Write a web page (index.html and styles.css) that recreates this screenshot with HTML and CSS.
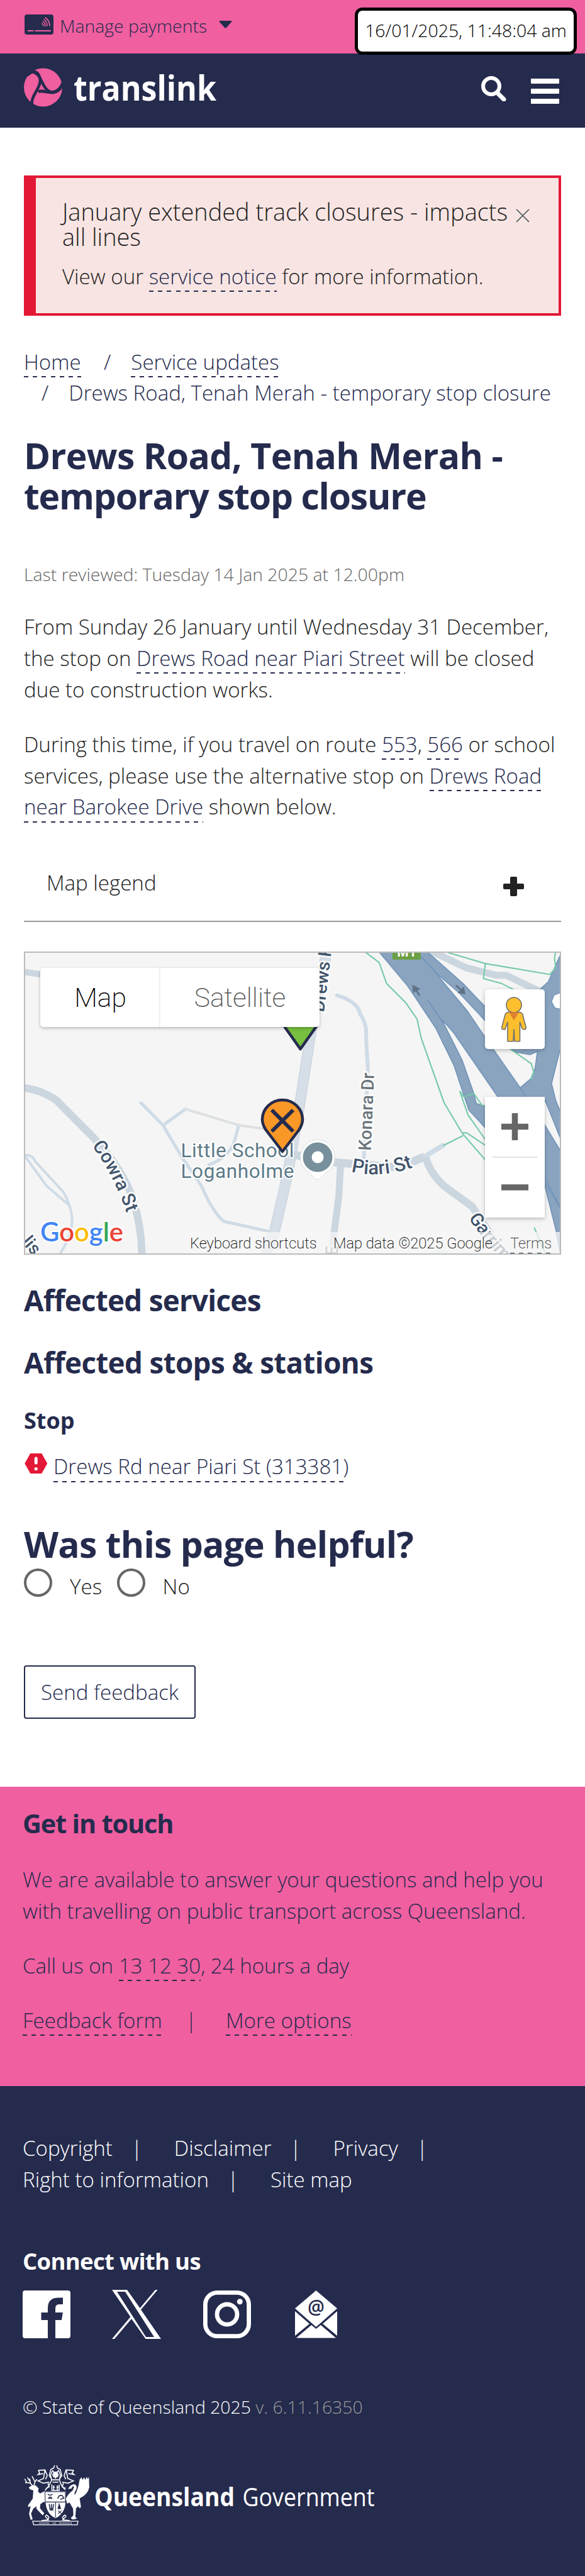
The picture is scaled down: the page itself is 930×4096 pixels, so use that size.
FILE: index.html
```html
<!DOCTYPE html>
<html lang="en">
<head>
<meta charset="utf-8">
<title>Drews Road, Tenah Merah - temporary stop closure | Translink</title>
<link rel="stylesheet" href="styles.css">
</head>
<body>
<div class="topbar">
  <svg class="card-icon" viewBox="0 0 46 32"><rect width="46" height="32" rx="4" fill="#252b4d"/><g fill="none" stroke="#f05fa0" stroke-width="1.6" stroke-linecap="round"><path d="M28 14q2 2 2 4M29.500 11q3.500 3 3.500 7.500M31 8q5 4 5 10M33 5q7 5 7 13"/></g><path d="M5 26h9.500M16.500 26H42" stroke="#f05fa0" stroke-width="2.200"/></svg>
  <span class="manage">Manage payments</span>
  <svg class="caret" viewBox="0 0 22 13"><path d="M1 0h20q1 1 0 2.500L12.500 12q-1.500 1.500-3 0L1 2.500Q0 1 1 0z" fill="#252b4d"/></svg>
  <div class="clock">16/01/2025, 11:48:04 am</div>
</div>
<header class="nav">
  <svg class="logo" viewBox="0 0 310 64">
    <circle cx="30.500" cy="31" r="30.500" fill="#f05fa0"/>
    <path d="M5 12Q18 0 24 12C30 24 20 35 15 46Q11 55 14 61" fill="none" stroke="#252b4d" stroke-width="4.500"/>
    <path d="M2 8Q9 4 14 5L9 12z" fill="#252b4d"/>
    <path d="M11 6C28 8 26 24 36 34C46 44 58 35 62 23" fill="none" stroke="#252b4d" stroke-width="4.500"/>
    <path d="M23 38C30 34 40 42 50 38Q57 36 62 26" fill="none" stroke="#252b4d" stroke-width="5"/>
    <text class="wordmark" x="79" y="52" textLength="227" lengthAdjust="spacingAndGlyphs">translink</text>
  </svg>
  <svg class="search" viewBox="0 0 40 40"><circle cx="16" cy="16" r="13" fill="none" stroke="#fff" stroke-width="6"/><path d="M26 27l10 10" stroke="#fff" stroke-width="7" stroke-linecap="round"/></svg>
  <div class="burger"><i></i><i></i><i></i></div>
</header>

<main class="page">
  <section class="alert">
    <h2 class="alert-title">January extended track closures - impacts<br>all lines</h2>
    <svg class="close" viewBox="0 0 22 22"><path d="M1 3l20 19M21 3L1 22" stroke="#fff" stroke-width="1.800"/><path d="M1 1l20 20M21 1L1 21" stroke="#666" stroke-width="1.800"/></svg>
    <p class="text">View our <a>service notice</a> for more information.</p>
  </section>

  <nav class="crumbs">
    <div class="crumb-row"><a>Home</a><span class="slash">/</span><a>Service updates</a></div>
    <div class="crumb-row second"><span class="slash">/</span><span>Drews Road, Tenah Merah - temporary stop closure</span></div>
  </nav>

  <h1 class="title"><span class="t1">Drews Road, Tenah Merah -</span><br><span class="t2">temporary stop closure</span></h1>
  <p class="reviewed">Last reviewed: Tuesday 14 Jan 2025 at 12.00pm</p>
  <p class="text para">From Sunday 26 January until Wednesday 31 December,<br>the stop on <a>Drews Road near Piari Street</a> will be closed<br>due to construction works.</p>
  <p class="text para">During this time, if you travel on route <a>553</a>, <a>566</a> or school<br>services, please use the alternative stop on <a>Drews Road</a><br><a>near Barokee Drive</a> shown below.</p>

  <div class="legend"><span>Map legend</span>
    <svg class="plus" viewBox="0 0 33 31"><rect x="11" y="0" width="11" height="31" rx="2" fill="#222"/><rect x="0" y="11" width="33" height="9" rx="2" fill="#222"/></svg>
  </div>

  <div class="map">
    <svg class="map-art" viewBox="0 0 854 482">
      <rect width="854" height="482" fill="#f5f5f5"/>
      <g transform="scale(.5931 .32196) translate(-64 -42)" class="roads">
        <path d="M64 142L120 158" stroke-width="10"/>
        <path class="lane" d="M378 790L437 900L497 820M437 900L485 1050L540 1200Q570 1330 600 1375L735 1430M640 900L625 1000Q600 1070 560 1095" stroke-width="5"/>
        <path class="lane faint" d="M497 820L640 900L720 920" stroke-width="4"/>
        <path class="lane" d="M64 1050Q85 1040 95 1080L170 1230Q195 1310 193 1380Q190 1450 160 1538M70 1060L125 1200L182 1290" stroke-width="4"/>
        <path d="M64 715Q110 725 150 775L250 960Q330 1120 355 1260Q380 1400 380 1538" stroke-width="12"/>
        <path class="edge" d="M876 42L835 420L803 800L770 1150L735 1430L712 1538" stroke-width="17"/>
        <path class="core" d="M876 42L835 420L803 800L770 1150L735 1430L712 1538" stroke-width="15"/>
        <path d="M785 1045L905 1085L1070 1108L1138 1055" stroke-width="13"/>
        <path class="lane" d="M1138 1055L1187 1000" stroke-width="8"/>
        <path d="M913 1090L908 1250L888 1538" stroke-width="11"/>
        <path d="M1142 1060Q1150 1130 1190 1200L1265 1300L1350 1538" stroke-width="12"/>
        <path class="lane" d="M903 258Q960 290 965 350Q985 400 981 470L986 620L975 1080" stroke-width="6"/>
        <path class="park" d="M1150 1538L1180 1500L1215 1538z"/>
      </g>
      <g transform="translate(466.800 -5.600) scale(.2629)">
        <path d="M680 15L900 120L1080 165L1140 165L1360 270" fill="none" stroke="#cbd6df" stroke-width="42"/>
        <g fill="#8aa4c0" stroke="#6f93b8" stroke-width="6">
          <path d="M365 15L545 230L715 485L825 710L915 980L1100 1180L1100 990L960 940L945 880L875 680L765 460L750 430L825 515L1090 900L1374 1390L1464 1560L1480 1560L1480 1245L1374 1070L1225 845L1065 615L905 380L705 140L715 150L850 265L1014 440L1060 400L1014 355L880 215L655 15z"/>
          <path d="M1480 20L1460 60L1395 205L1355 240L1200 400L1100 560L1200 630L1285 645L1330 625L1315 730L1290 790L1225 845L1260 900L1380 930L1480 1180L1480 1020L1440 920L1415 820L1480 560z"/>
          <path d="M1360 1380L1470 1580L1470 1860L1440 1700z"/>
        </g>
        <path d="M625 50L710 140M665 315L765 460" stroke="#6f93b8" stroke-width="7"/>
        <path d="M1480 265L1430 285L1415 325L1435 362L1480 372" fill="#fff" stroke="#6f93b8" stroke-width="5"/>
        <g fill="none" stroke="#76c9a8" stroke-width="8">
          <path d="M285 22L373 88L417 214L533 330L602 430L627 545L765 935L875 1120L1100 1380M760 1195L880 1135M870 1118H902L1100 1250M1100 1280L910 1010L860 865L885 900L945 880L995 952H1100"/>
          <path d="M790 28L1015 94L1405 160L1440 120L1433 60L1440 20M1015 94L1003 185L1110 213L1290 305M1150 600L1293 700L1307 750L1290 795M1310 1690L1400 1900"/>
        </g>
        <g fill="#5f7388" stroke="#5f7388" stroke-width="11"><path d="M617 287L590 245"/><path stroke="none" d="M573 222L622 247L577 272z"/><path d="M837 226L875 260"/><path stroke="none" d="M895 281L846 272L884 232z"/></g>
        <rect x="453" y="0" width="171" height="70" fill="#6b9f43"/>
      </g>
      <text class="badge" x="608.500" y="8">M1</text>
      <path id="piari" d="M520 350Q570 362 625 341" fill="none"/>
      <path id="cowra" d="M108 309Q143 355 165 420" fill="none"/>
      <path id="garri" d="M707 424Q722 448 764 495" fill="none"/>
      <g class="street">
        <text transform="translate(477 97) rotate(-83)" font-size="29">Drews Rd</text>
        <text class="grey" transform="translate(551.500 317) rotate(-87.500)" font-size="28" textLength="124">Konara Dr</text>
        <text font-size="31"><textPath href="#piari">Piari St</textPath></text>
        <text font-size="30"><textPath href="#cowra">Cowra St</textPath></text>
        <text font-size="29"><textPath href="#garri">Garrima</textPath></text>
        <text transform="translate(-4 462) rotate(50)" font-size="28">lis</text>
        <text class="grey" transform="translate(499 484) rotate(-88)" font-size="28">E</text>
      </g>
      <path d="M467 299a28 28 0 0 1 20 47q-8 6-15 14-5 5-10 0-7-8-15-14a28 28 0 0 1 20-47z" fill="#fff" stroke="#d8dde0"/>
      <circle cx="467" cy="327" r="16.500" fill="none" stroke="#78909c" stroke-width="14"/>
      <g class="place"><text x="249.500" y="327" textLength="180">Little School</text><text x="249.500" y="360" textLength="180">Loganholme</text></g>
      <path d="M439.500 155L414 119V90H465V119z" fill="#76bf3f" stroke="#252b4d" stroke-width="4.500" stroke-linejoin="round"/>
      <path d="M411 318L385 284Q379 275 379 267a32 31 0 0 1 64 0Q443 275 437 284z" fill="#f99727" stroke="#252b4d" stroke-width="4.500" stroke-linejoin="round"/>
      <path d="M394 252l34 34M428 252l-34 34" stroke="#252b4d" stroke-width="6"/>
      <text class="google" x="26" y="461" textLength="132" lengthAdjust="spacingAndGlyphs"><tspan fill="#4285f4">G</tspan><tspan fill="#ea4335">o</tspan><tspan fill="#fbbc05">o</tspan><tspan fill="#4285f4">g</tspan><tspan fill="#34a853">l</tspan><tspan fill="#ea4335">e</tspan></text>
    </svg>
    <div class="map-type"><span>Map</span><span class="sat">Satellite</span></div>
    <div class="pegman">
      <svg viewBox="0 0 152 272"><g fill="#fdbf2d" stroke="#6f6f6f" stroke-width="6" stroke-linejoin="round"><path d="M40 92h72q12 2 16 12l22 84q-4 10-14 8-8 0-10-4l-14-40v116H80l-4-72-4 72H38V152l-14 40q-4 6-10 4-12 0-12-10l22-82q4-10 16-12z"/><circle cx="76" cy="49" r="46"/></g><path d="M46 92h60l-30 50z" fill="#e08030"/></svg>
    </div>
    <div class="zoom">
      <svg viewBox="0 0 95 192"><path d="M26 47.500h43M47.500 26v43M26 144h43" stroke="#666" stroke-width="9.500"/><path d="M12 96h71" stroke="#e6e6e6" stroke-width="2.400"/></svg>
    </div>
    <div class="attrib"><span class="kb">Keyboard shortcuts</span><span class="data">Map data ©2025 Google</span><a>Terms</a></div>
  </div>

  <h2 class="h2">Affected services</h2>
  <h2 class="h2 stops">Affected stops &amp; stations</h2>
  <h3 class="h3">Stop</h3>
  <div class="stop-row">
    <svg class="alert-icon" viewBox="0 0 36 32"><path d="M9 0h18l9 16-9 16H9L0 16z" fill="#e31836"/><path d="M18 8v7" stroke="#fff" stroke-width="5" stroke-linecap="round"/><circle cx="18" cy="24.500" r="2.600" fill="#fff"/></svg>
    <a>Drews Rd near Piari St (313381)</a>
  </div>

  <h2 class="title helpful">Was this page helpful?</h2>
  <div class="radios"><i></i><span class="yes">Yes</span><i></i><span>No</span></div>
  <button class="send">Send feedback</button>
</main>

<section class="touch">
  <h2 class="touch-title">Get in touch</h2>
  <p class="text">We are available to answer your questions and help you<br>with travelling on public transport across Queensland.</p>
  <p class="text">Call us on <a>13 12 30</a>, 24 hours a day</p>
  <p class="text links"><a>Feedback form</a><span>|</span><a>More options</a></p>
</section>

<footer class="footer">
  <div class="foot-links"><span>Copyright</span><i>|</i><span>Disclaimer</span><i>|</i><span>Privacy</span><i>|</i></div>
  <div class="foot-links"><span>Right to information</span><i>|</i><span>Site map</span></div>
  <h3 class="connect">Connect with us</h3>
  <div class="social">
    <svg class="fb" viewBox="0 0 76 76"><path d="M4 0h68q4 0 4 4v68q0 4-4 4H52V47h10l1.800-12H52v-6q0-7 6-7h6V11.500h-7Q40 11.500 40 28v7H29.500v12H40v29H4q-4 0-4-4V4q0-4 4-4z" fill="#fff"/></svg>
    <svg class="x" viewBox="0 0 78 78"><path d="M0 0h24l20.500 29L69 0h3.500L46 31.500 78 78H53.500L31 46 4 78H0l29.500-35zM8 3l46 72h13L21 3z" fill="#fff" fill-rule="evenodd"/></svg>
    <svg class="ig" viewBox="0 0 76 76"><rect x="3.400" y="3.400" width="69.200" height="69.200" rx="19" fill="none" stroke="#fff" stroke-width="6.800"/><circle cx="38" cy="38" r="16" fill="none" stroke="#fff" stroke-width="6.800"/><circle cx="58.300" cy="17.700" r="4.500" fill="#fff"/></svg>
    <svg class="mail" viewBox="0 0 67 76"><path d="M33.500 0L67 28.500 33.500 58 0 28.500z" fill="#fff"/><path d="M0 33l23 20L0 72zM67 33L44 53l23 19zM2 75.500L26 55l7.500 6 7.500-6 24 20.500z" fill="#fff"/><text x="33.500" y="37" text-anchor="middle">@</text></svg>
  </div>
  <p class="copy">© State of Queensland 2025 <span>v. 6.11.16350</span></p>
  <svg class="gov" viewBox="0 0 566 114">
    <g transform="scale(.2629)" fill="#fff" stroke="none">
      <path d="M52 172L70 160 95 160 112 178 108 196 120 208 150 194 158 262 140 260 122 274 120 298 146 328 136 340 100 302 98 286 80 300 66 330 76 364 64 368 54 332 64 284 50 292 48 280 76 240 80 190 60 184z"/>
      <g fill="none" stroke="#fff" stroke-width="6"><path d="M76 162L62 146 40 142 28 120M62 146L58 118M40 142L30 144M84 160L90 138 72 104M90 138L102 122M58 134L44 112"/></g>
      <path d="M416 108L418 172Q408 216 360 238L368 290 360 298 350 286 338 298 334 350 344 360 318 366 306 358 322 340 320 300 298 262 284 270 276 240Q290 210 318 190L326 168Q316 158 312 178L290 182Q300 156 326 152 348 158 340 184 324 206 330 218 350 190 360 124L372 110 376 126 388 110 392 126 404 108 408 122z"/>
      <path d="M148 196H276L274 264Q270 330 214 358 160 332 154 264z"/>
      <g fill="none" stroke="#fff" stroke-width="6">
        <path d="M212 88L196 70 184 96 190 126H238L244 96 232 70zM190 130L172 164 150 190M238 130L252 162 272 186M192 154V190H236V154M196 140H232M203 160V188M225 160V188M198 170H210M220 170H232"/>
        <path d="M204 54L186 62 176 100 190 120M224 54L242 62 252 100 238 120M110 68L150 66 142 118 108 132 140 146 176 140M110 68L118 84 108 94 140 88M324 68L278 66 288 118 322 132 290 146 254 140M324 68L314 84 326 94 292 88M150 66L164 100 154 122M278 66L266 100 276 122M204 54L208 38M224 54L222 38M156 178L176 168 168 146M276 178L254 168 262 146"/>
        <path d="M200 82L228 110M228 82L200 110M214 76V118M194 96H234" stroke-width="9"/>
        <path d="M160 338Q148 346 158 354L170 368 130 372M270 338Q284 346 270 354L258 368 300 372M160 338L174 352 168 370M270 338L256 352 262 370"/>
        <path d="M76 376H350L346 398H82z" stroke-width="5"/>
        <path d="M116 388H180M198 388H218M236 388H314" stroke-width="9" stroke-dasharray="3 5"/>
      </g>
      <g fill="none" stroke="#252b4d" stroke-width="4"><path d="M150 198H274V260H152zM214 260V354"/><path d="M168 212Q180 226 196 212M172 238Q182 220 192 238zM228 240Q232 214 256 222L264 236 244 244M176 272L180 300H198L202 272M189 272V312M178 308H202" stroke-width="6"/><path d="M230 312L250 330M250 312L230 330"/></g>
      <path d="M226 302L236 264 248 302z" fill="#252b4d"/>
    </g>
    <text class="qld" x="118" y="75" textLength="223" lengthAdjust="spacingAndGlyphs">Queensland</text>
    <text class="govt" x="353.500" y="75" textLength="210" lengthAdjust="spacingAndGlyphs">Government</text>
  </svg>
</footer>
</body>
</html>
```
FILE: styles.css
```css
* { box-sizing: border-box; margin: 0; padding: 0; }
body { width: 930px; height: 4096px; overflow: hidden; background: #fff; color: #222; font-family: "Open Sans", sans-serif; font-weight: 300; font-size: 33.1px; line-height: 49.7px; }
svg { display: block; flex: none; }
i { font-style: normal; }
a { color: #252b4d; padding-bottom: 2.300px; background: repeating-linear-gradient(90deg, #252b4d 0 7px, transparent 7px 14.200px) 0 100% / 100% 2px no-repeat; }

.topbar { position: relative; height: 85px; background: #f05fa0; color: #252b4d; display: flex; padding-left: 39px; }
.card-icon { width: 46px; height: 32px; margin-top: 23px; }
.manage { font-size: 28.400px; line-height: 42.600px; margin: 19.700px 0 0 10px; width: 235px; white-space: nowrap; }
.caret { width: 21px; height: 12px; margin: 33px 0 0 18px; }
.clock { position: absolute; z-index: 2; left: 564px; top: 12px; width: 353px; height: 75px; border: 5px solid #000; border-radius: 12px; background: #fff; color: #000; font-size: 28.400px; line-height: 62px; text-align: center; white-space: nowrap; }

.nav { height: 118px; background: #252b4d; display: flex; padding-left: 38px; }
.logo { width: 310px; height: 64px; margin-top: 23px; }
.wordmark { font: 700 56px "Open Sans", sans-serif; fill: #fff; }
.search { width: 40px; height: 40px; margin: 36px 0 0 417px; }
.burger { display: grid; gap: 8.400px; align-content: start; width: 45px; margin: 40px 0 0 39px; }
.burger i { height: 7.600px; background: #fff; border-radius: 1px; }

.page { padding: 76px 38px 0; height: 2638px; }
.alert { display: grid; grid-template-columns: 1fr 22px; height: 222.700px; align-content: start; column-gap: 0; background: #f8e5e3; border: 4.700px solid #e31836; border-left-width: 19px; padding: 33px 46px 0 42px; }
.alert-title { font-size: 37.900px; line-height: 40.200px; font-weight: 300; white-space: nowrap; }
.close { width: 22px; height: 22px; margin-top: 15.500px; }
.alert .text { margin-top: 18.400px; white-space: nowrap; }

.crumbs { margin-top: 49px; color: #252b4d; }
.crumb-row { display: flex; height: 49.700px; white-space: nowrap; align-items: flex-start; }
.crumb-row > a { padding-bottom: 0; height: 49.700px; line-height: 49.700px; }
.slash { margin: 0 32px 0 36.500px; }
.second .slash { margin-left: 28px; }
.title { margin-top: 43px; font-size: 57px; line-height: 63.800px; font-weight: 700; color: #252b4d; white-space: nowrap; }
.t1 { letter-spacing: -.65px; }
.t2 { letter-spacing: -1.200px; }
.reviewed { margin-top: 71.300px; font-size: 28.400px; line-height: 42.600px; color: #666; }
.para { margin-top: 37.600px; white-space: nowrap; }

.legend { display: flex; justify-content: space-between; margin-top: 32px; padding: 39px 59px 0 36px; height: 125.700px; border-bottom: 2.400px solid #999; }
.plus { width: 33px; height: 31px; margin-top: 15px; }

.map { position: relative; margin-top: 47px; width: 854px; height: 482px; border: 2.400px solid #bbb; overflow: hidden; font-family: Roboto, sans-serif; }
.map-art { width: 854px; height: 482px; margin: -2px 0 0 -2px; }
.roads path { fill: none; stroke: #cbd6df; vector-effect: non-scaling-stroke; stroke-linejoin: round; }
.roads .lane { stroke: #cfdbe6; stroke-linecap: round; }
.roads .faint { stroke: #dde0e2; }
.roads .edge { stroke: #c3ceda; }
.roads .core { stroke: #d6dfe7; }
.roads .park { fill: #dcefe3; stroke: none; }
.badge { font: 700 21px Roboto, sans-serif; fill: #fff; text-anchor: middle; }
.street text { font-family: Roboto, sans-serif; font-weight: 500; fill: #43566d; stroke: #fff; stroke-width: 5px; paint-order: stroke; stroke-linejoin: round; }
.street .grey { fill: #6b757c; }
.place text { font: 400 31.500px Roboto, sans-serif; fill: #5c7a88; stroke: #fff; stroke-width: 4px; paint-order: stroke; stroke-linejoin: round; }
.google { font: 600 43px Lato, sans-serif; stroke: #fff; stroke-width: 4px; paint-order: stroke; }
.map-type { position: absolute; left: 24px; top: 24px; width: 444px; height: 94.700px; display: grid; grid-template-columns: 191px 253px; background: #fff; border-radius: 5px; box-shadow: 0 2px 5px rgba(0,0,0,.25); font-size: 42.600px; font-weight: 200; line-height: 94px; color: #000; text-align: center; }
.sat { color: #565656; box-shadow: -2px 0 2px rgba(0,0,0,.08); }
.pegman, .zoom { position: absolute; left: 731px; width: 95px; background: #fff; box-shadow: 0 2px 6px rgba(0,0,0,.25); }
.pegman { top: 58.500px; height: 95px; border-radius: 5px; }
.pegman svg { width: 40px; height: 72px; margin: 11.500px 0 0 26px; }
.zoom { top: 229px; height: 192px; }
.zoom svg { width: 95px; height: 192px; }
.attrib { position: absolute; left: 248px; top: 444px; width: 606px; height: 36px; background: rgba(245,245,245,.75); display: flex; padding-left: 14px; font-size: 23.700px; font-weight: 200; line-height: 36px; color: #000; white-space: nowrap; }
.kb { width: 228px; }
.data { width: 281px; }
.attrib a { height: 35px; padding: 0; color: #333; }

.h2 { margin-top: 45.200px; font-size: 45.700px; line-height: 54px; font-weight: 700; color: #252b4d; white-space: nowrap; letter-spacing: -.7px; }
.stops { margin-top: 45.400px; letter-spacing: -.6px; }
.h3 { margin-top: 42.200px; font-size: 36px; line-height: 48px; font-weight: 700; color: #252b4d; }
.stop-row { display: flex; margin-top: 23.900px; }
.stop-row a { height: 49.700px; padding: 0; }
.alert-icon { width: 36.500px; height: 32px; margin: 3.500px 10px 0 .5px; }
.helpful { margin-top: 66.800px; letter-spacing: -.75px; }
.radios { display: flex; margin-top: 6.500px; height: 52px; }
.radios i { width: 45px; height: 45px; border: 4.700px solid #666; border-radius: 50%; flex: none; }
.radios span { margin: 3.600px 0 0 28px; }
.radios .yes { width: 74.600px; }
.send { display: block; margin-top: 101.500px; width: 273px; height: 85px; border: 2.400px solid #252b4d; border-radius: 4px; background: #fff; color: #252b4d; font: 300 33.100px "Open Sans", sans-serif; white-space: nowrap; }

.touch { height: 476px; background: #f05fa0; color: #252b4d; padding: 31.300px 36px 0; white-space: nowrap; }
.touch-title { font-size: 41.400px; line-height: 54px; font-weight: 700; letter-spacing: -1.150px; }
.touch .text { margin-top: 37.600px; }
.links span { margin: 0 46px 0 37.500px; }

.footer { height: 779px; background: #252b4d; color: #fff; padding: 74.300px 36px 0; white-space: nowrap; }
.foot-links { display: flex; }
.foot-links i { margin: 0 50.500px 0 29.500px; }
.connect { margin-top: 80.300px; font-size: 36.500px; line-height: 48px; font-weight: 700; letter-spacing: -.7px; }
.social { display: flex; margin-top: 22.600px; height: 77px; }
.fb, .ig { width: 76px; height: 76px; }
.x { width: 78px; height: 78px; margin: -1px 67.500px 0 65.500px; }
.mail { width: 67px; height: 76px; margin-left: 70px; }
.mail text { font: 600 30px "Open Sans", sans-serif; fill: #252b4d; }
.copy { margin-top: 87.500px; font-size: 28.400px; line-height: 42.600px; }
.copy span { color: #999; }
.gov { width: 566px; height: 114px; margin: 61.500px 0 0 -4px; }
.qld { font: 700 41px "Open Sans", sans-serif; fill: #fff; }
.govt { font: 400 41px "Open Sans", sans-serif; fill: #fff; }
```
